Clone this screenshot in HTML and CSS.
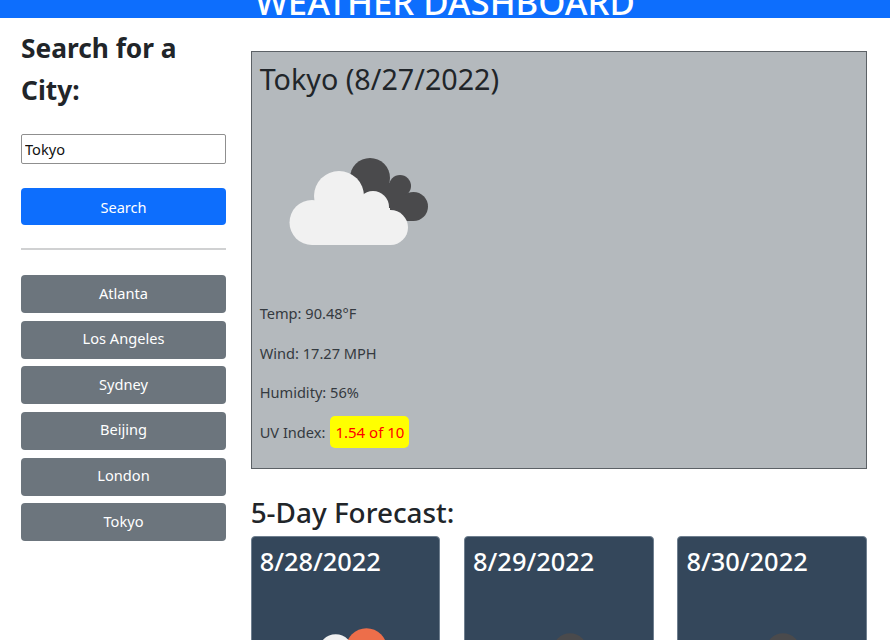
FILE: index.html
```html
<!DOCTYPE html>
<html lang="en">
<head>
  <meta charset="UTF-8" />
  <title>Weather Dashboard</title>
  <meta name="viewport" content="width=device-width, initial-scale=1.0" />
  <link rel="stylesheet" href="styles.css">
</head>
<body>
  <header class="topbar">
    <h1>WEATHER DASHBOARD</h1>
  </header>

  <div class="page">
    <aside class="sidebar">
      <h2 class="search-title">Search for a City:</h2>
      <input class="city-input" type="text" value="Tokyo" />
      <button class="btn btn-primary">Search</button>
      <hr class="divider" />
      <div class="history">
        <button class="btn btn-grey">Atlanta</button>
        <button class="btn btn-grey">Los Angeles</button>
        <button class="btn btn-grey">Sydney</button>
        <button class="btn btn-grey">Beijing</button>
        <button class="btn btn-grey">London</button>
        <button class="btn btn-grey">Tokyo</button>
      </div>
    </aside>

    <main class="content">
      <section class="current">
        <h2 class="current-title">Tokyo (8/27/2022)</h2>
        <svg class="current-icon" viewBox="0 0 200 200">
          <g class="cloud-dark">
            <circle cx="110" cy="80" r="20" />
            <circle cx="140" cy="88" r="11" />
            <circle cx="153.500" cy="108.500" r="14.500" />
            <rect x="105" y="98" width="48" height="25" />
            <rect x="120" y="85" width="25" height="20" />
          </g>
          <g class="cloud-light">
            <circle cx="52" cy="124.500" r="22.500" />
            <circle cx="79" cy="98" r="25" />
            <circle cx="113" cy="109" r="16" />
            <circle cx="130.500" cy="129.500" r="17.500" />
            <rect x="52" y="110" width="78" height="37" />
          </g>
        </svg>
        <p>Temp: 90.48°F</p>
        <p>Wind: 17.27 MPH</p>
        <p>Humidity: 56%</p>
        <p class="uv">UV Index: <span class="uv-badge">1.54 of 10</span></p>
      </section>

      <h2 class="forecast-title">5-Day Forecast:</h2>
      <section class="forecast">
        <div class="day-card">
          <h3>8/28/2022</h3>
          <svg class="day-icon" viewBox="0 0 200 200">
            <circle class="sun" cx="121" cy="78" r="24" />
            <g class="cloud-light">
              <circle cx="57" cy="115" r="20" />
              <circle cx="85" cy="81" r="20" />
              <circle cx="117" cy="120" r="15" />
              <rect x="57" y="90" width="60" height="45" />
            </g>
          </svg>
        </div>
        <div class="day-card">
          <h3>8/29/2022</h3>
          <svg class="day-icon" viewBox="0 0 200 200">
            <g class="cloud-dark">
              <circle cx="110" cy="80" r="20" />
              <circle cx="140" cy="88" r="11" />
              <circle cx="153.500" cy="108.500" r="14.500" />
              <rect x="105" y="98" width="48" height="25" />
            </g>
          </svg>
        </div>
        <div class="day-card">
          <h3>8/30/2022</h3>
          <svg class="day-icon" viewBox="0 0 200 200">
            <g class="cloud-dark">
              <circle cx="110" cy="80" r="20" />
              <circle cx="140" cy="88" r="11" />
              <circle cx="153.500" cy="108.500" r="14.500" />
              <rect x="105" y="98" width="48" height="25" />
            </g>
          </svg>
        </div>
      </section>
    </main>
  </div>
</body>
</html>
```

FILE: styles.css
```css
:root {
  --blue: #0d6efd;
  --grey: #6c757d;
  --panel: #b4b9bd;
  --navy: #34475b;
  --text: #212529;
}

html, body {
  height: 640px;
  overflow: hidden;
}

body {
  margin: 0;
  font-family: "Noto Sans", Arial, sans-serif;
  font-size: 14.600px;
  line-height: 24px;
  color: var(--text);
  background-color: #fff;
}

.topbar {
  height: 18px;
  overflow: hidden;
  display: flex;
  justify-content: center;
  align-items: flex-end;
  background-color: var(--blue);
}

.topbar h1 {
  flex: none;
  margin: 0 0 -4px;
  font-size: 34.700px;
  line-height: 40px;
  font-weight: 500;
  color: #fff;
}

.page {
  display: flex;
  gap: 24.670px;
  padding: 10px 23px 0 21px;
}

.sidebar {
  flex: none;
  width: 205px;
}

.search-title {
  margin: -1px 0 23px;
  font-size: 26.300px;
  line-height: 42px;
  font-weight: 700;
}

.city-input {
  display: block;
  box-sizing: border-box;
  width: 100%;
  height: 30px;
  padding: 0 3px;
  margin-bottom: 24px;
  border: 1px solid #8f8f8f;
  border-radius: 2px;
  font: inherit;
  color: #111;
}

.btn {
  display: block;
  box-sizing: border-box;
  width: 100%;
  height: 38px;
  border: 1px solid transparent;
  border-radius: 4px;
  font: inherit;
  color: #fff;
}

.btn-primary {
  height: 37px;
  background-color: var(--blue);
}

.btn-grey {
  padding-bottom: 4px;
  background-color: var(--grey);
}

.divider {
  margin: 23px 0 25px;
  border: none;
  border-top: 2px solid #d0d1d2;
}

.history {
  display: flex;
  flex-direction: column;
  gap: 7.670px;
}

.content {
  flex: 1;
  min-width: 0;
  padding-top: 23px;
}

.current {
  box-sizing: border-box;
  height: 418px;
  padding: 8px;
  border: 1px solid #5c6166;
  background-color: var(--panel);
}

.current p {
  margin: 0 0 15.670px;
  color: #343a40;
}

.current-title {
  margin: 0;
  font-size: 28.700px;
  line-height: 38px;
  font-weight: 400;
}

.current-icon {
  display: block;
  width: 200px;
  height: 200px;
  margin-bottom: 3px;
}

.current .uv {
  display: flex;
  align-items: center;
  gap: 5px;
  height: 24px;
}

.uv-badge {
  padding: 4px 5px;
  border-radius: 5px;
  font-size: 15px;
  background-color: #ff0;
  color: #f00;
}

.cloud-dark {
  fill: #4a4a4c;
}

.cloud-light {
  fill: #f1f1f1;
}

.sun {
  fill: #ed6e4a;
}

.forecast-title {
  margin: 24px 0 4px;
  font-size: 27.900px;
  line-height: 39px;
  font-weight: 500;
}

.forecast {
  display: grid;
  grid-template-columns: repeat(3, minmax(0, 1fr));
  gap: 23.900px;
}

.day-card {
  box-sizing: border-box;
  height: 300px;
  padding: 7px 8px 8px;
  border: 1px solid #6f7f8f;
  border-radius: 4px;
  background-color: var(--navy);
  color: #fff;
}

.day-card h3 {
  margin: 0;
  font-size: 25.400px;
  line-height: 34px;
  font-weight: 500;
}

.day-icon {
  display: block;
  width: 171px;
  height: 171px;
  margin: 4px 0 0 3px;
}
```
